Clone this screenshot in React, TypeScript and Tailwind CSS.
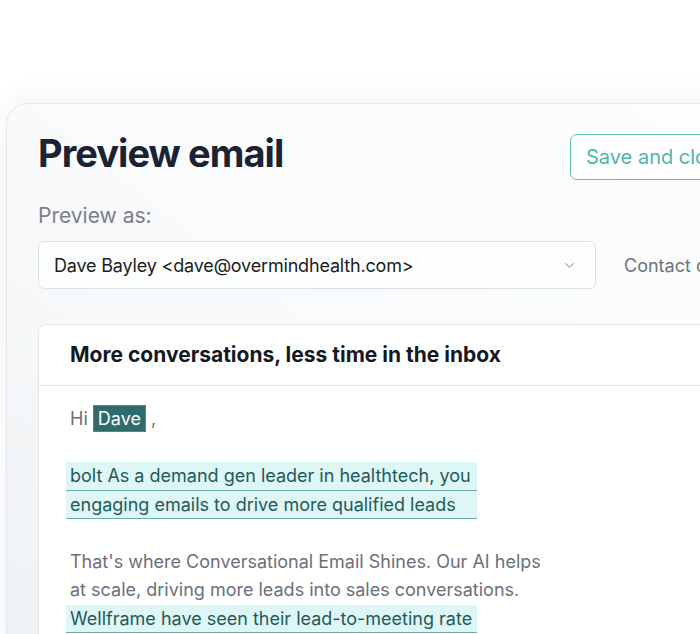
import { ChevronDown } from "lucide-react"

const hl = "block w-[411px] -ml-[4px] pl-[4px] h-[28.5px] bg-[#dff6f6] border-b border-[#6fa9a6] text-[#1d5b5a] whitespace-nowrap"

export default function App() {
	return (
		<div className="w-[700px] h-[634px] overflow-hidden bg-white pt-[103px] pl-[6px] font-['Inter',sans-serif]">
			<div className="w-[760px] h-[600px] rounded-tl-[22px] border border-[#e4e7eb] bg-linear-to-bl from-[#fdfdfd] via-[#f9fafb] to-[#eef2f5] shadow-[0_-6px_30px_rgba(0,0,0,0.05)] pl-[31px] pt-[26px]">
				<div className="flex items-start">
					<div className="w-[532px] text-[38px] leading-[46px] font-bold tracking-tight text-[#1a2233]">
						Preview email
					</div>
					<button className="mt-[4px] h-[46px] px-[15px] rounded-[7px] border-[1.5px] border-[#5fc0b2] text-[20px] text-[#4fb5a6] whitespace-nowrap bg-white/60">
						Save and close
					</button>
				</div>

				<div className="mt-[22px] text-[21px] leading-[28px] text-[#7b7f87]">Preview as:</div>
				<div className="mt-[11px] flex items-center">
					<div className="w-[558px] h-[48px] rounded-[6px] border border-[#dde2e9] bg-[#fcfdfd] flex items-center justify-between pl-[15px] pr-[18px]">
						<span className="text-[18px] tracking-[-0.01em] text-[#1b1d21]">Dave Bayley &lt;dave@overmindhealth.com&gt;</span>
						<ChevronDown size={15} strokeWidth={1.5} className="text-[#6b7079]" />
					</div>
					<span className="ml-[28px] text-[18px] text-[#6f737b] whitespace-nowrap">Contact details</span>
				</div>

				<div className="mt-[35px] rounded-tl-[8px] border border-[#e3e7ec] bg-white h-[400px]">
					<div className="h-[61px] border-b border-[#e3e7ec] flex items-center pl-[31px] text-[21px] font-bold text-[#15191f] whitespace-nowrap">
						More conversations, less time in the inbox
					</div>
					<div className="pl-[31px] pt-[19px] text-[18px] leading-[28.5px] text-[#6b7079]">
						<div>
							Hi{" "}
							<span className="inline-block leading-[25px] px-[4px] bg-[#2f6b6b] border border-[#4f8a89] text-white">Dave</span>{" "}
							,
						</div>
						<div className="h-[28.5px]" />
						<span className={hl}>bolt As a demand gen leader in healthtech, you</span>
						<span className={hl}>engaging emails to drive more qualified leads</span>
						<div className="h-[28.5px]" />
						<div>That's where Conversational Email Shines. Our AI helps</div>
						<div>at scale, driving more leads into sales conversations.</div>
						<span className={hl}>Wellframe have seen their lead-to-meeting rate</span>
					</div>
				</div>
			</div>
		</div>
	)
}
